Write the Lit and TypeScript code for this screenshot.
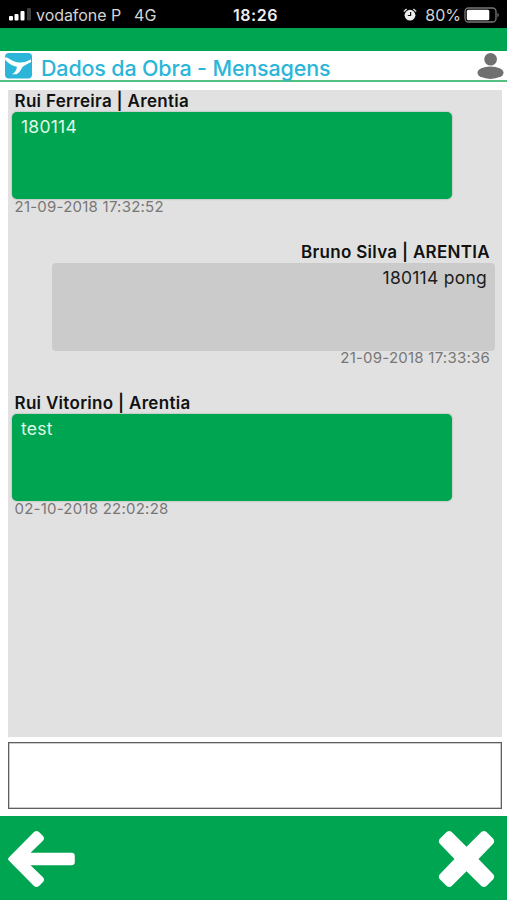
import { LitElement, html, css } from "lit";
import { customElement, property } from "lit/decorators.js";
import { classMap } from "lit/directives/class-map.js";

interface Message {
  author: string;
  text: string;
  date: string;
  own: boolean;
}

const MESSAGES: Message[] = [
  { author: "Rui Ferreira | Arentia", text: "180114", date: "21-09-2018 17:32:52", own: false },
  { author: "Bruno Silva | ARENTIA", text: "180114 pong", date: "21-09-2018 17:33:36", own: true },
  { author: "Rui Vitorino | Arentia", text: "test", date: "02-10-2018 22:02:28", own: false },
];

@customElement("status-bar")
class StatusBar extends LitElement {
  static styles = css`
    :host {
      display: grid;
      grid-template-columns: 1fr auto 1fr;
      align-items: center;
      height: 28px;
      padding: 0 6px 0 9px;
      background: #000;
      color: #d4d4d4;
      font-size: 16px;
      line-height: 28px;
      box-sizing: border-box;
    }
    svg { display: block; flex: none; }
    .left, .right { display: flex; align-items: center; height: 28px; padding-top: 1px; box-sizing: border-box; }
    .right { justify-content: flex-end; }
    .carrier { margin-left: 4px; letter-spacing: -0.05px; }
    .network { margin-left: 13px; }
    .time { font-weight: 600; color: #eee; padding: 1px 0 0 1px; letter-spacing: 0.5px; }
    .level { margin: 0 3px 0 8px; }
  `;
  render() {
    return html`
      <div class="left">
        <svg width="23" height="14" viewBox="0 0 23 14">
          <rect x="0" y="8" width="4" height="4.500" rx="1" fill="#fff" />
          <rect x="5.500" y="6" width="4" height="6.500" rx="1" fill="#fff" />
          <rect x="11.500" y="3" width="4" height="9.500" rx="1" fill="#fff" />
          <rect x="18" y="0" width="4" height="12.500" rx="1" fill="#3c3c3c" />
        </svg>
        <span class="carrier">vodafone P</span><span class="network">4G</span>
      </div>
      <div class="time">18:26</div>
      <div class="right">
        <svg width="14" height="14" viewBox="0 0 14 14">
          <circle cx="7" cy="7.200" r="5.400" fill="#eee" />
          <path d="M.8 3.600 3.600 1M13.200 3.600 10.400 1" stroke="#ddd" stroke-width="1.400" />
          <path d="M7.600 4v3.500H4.800" fill="none" stroke="#111" stroke-width="1.200" />
        </svg>
        <span class="level">80%</span>
        <svg width="37" height="16" viewBox="0 0 37 16">
          <rect x="1" y="1" width="31" height="14" rx="3.500" fill="none" stroke="#777" stroke-width="1.300" />
          <rect x="2.800" y="2.800" width="22.500" height="10.400" rx="1.500" fill="#fff" />
          <path d="M33.500 5.700q2.500 2.300 0 4.600z" fill="#888" />
        </svg>
      </div>
    `;
  }
}

@customElement("page-header")
class PageHeader extends LitElement {
  static styles = css`
    :host {
      display: flex;
      align-items: center;
      height: 31px;
      padding: 0 3px 0 5px;
      box-sizing: border-box;
      background: #fff;
      border-bottom: 2px solid #52c080;
    }
    svg { display: block; flex: none; }
    .title {
      flex: 1;
      margin-left: 9px;
      padding-top: 4px;
      font-size: 21.5px;
      line-height: 28px;
      font-weight: 500;
      letter-spacing: -0.17px;
      color: #2bb5d8;
      white-space: nowrap;
    }
  `;
  render() {
    return html`
      <svg width="27" height="26" viewBox="0 0 27 26">
        <rect width="27" height="25.500" rx="4" fill="#2bb5d8" />
        <path d="M0 4.500 2 4.500Q7.500 8.300 12 9.200 18 10.700 26 6.500V9Q20 12 17.500 14 14.500 20 11.500 21.300L7 21.300Q12 18 11.800 13.700 6 13 0 6.800z" fill="#fff" />
      </svg>
      <span class="title">Dados da Obra - Mensagens</span>
      <svg width="27" height="27" viewBox="0 0 27 27">
        <circle cx="13.600" cy="7.200" r="6.300" fill="#707070" />
        <ellipse cx="13.500" cy="20.700" rx="13" ry="6.200" fill="#707070" />
      </svg>
    `;
  }
}

@customElement("message-item")
class MessageItem extends LitElement {
  @property({ attribute: false }) message!: Message;
  static styles = css`
    :host { display: block; height: 151px; }
    .item { display: flex; flex-direction: column; align-items: flex-start; padding-left: 4px; }
    .author {
      height: 22px;
      padding: 0 2.5px;
      font-size: 17px;
      line-height: 22px;
      font-weight: 600;
      letter-spacing: 0.3px;
      color: #111;
    }
    .bubble {
      width: 440px;
      height: 87px;
      padding: 2px 9px;
      box-sizing: border-box;
      border-radius: 5px;
      background: #00a551;
      color: #e0f8e8;
      font-size: 17.5px;
      line-height: 25px;
      letter-spacing: 0.25px;
      box-shadow: 0 0 2px rgba(0, 80, 40, 0.4);
    }
    .date {
      padding: 0 2.5px;
      font-size: 15px;
      line-height: 15px;
      letter-spacing: 0.23px;
      color: #777;
    }
    .own { align-items: flex-end; padding: 0 7px 0 0; }
    .own .author, .own .date { padding-right: 5px; }
    .own .bubble {
      width: 443px;
      height: 88px;
      padding-right: 8px;
      background: #cbcbcb;
      color: #1c1c1c;
      text-align: right;
      box-shadow: none;
      border-radius: 4px;
    }
    .own .date { line-height: 13px; }
  `;
  render() {
    const m = this.message;
    return html`
      <div class=${classMap({ item: true, own: m.own })}>
        <div class="author">${m.author}</div>
        <div class="bubble">${m.text}</div>
        <div class="date">${m.date}</div>
      </div>
    `;
  }
}

@customElement("app-root")
class AppRoot extends LitElement {
  static styles = css`
    :host {
      display: flex;
      flex-direction: column;
      height: 900px;
      background: #fff;
      font-family: Inter, "Liberation Sans", sans-serif;
      overflow: hidden;
    }
    .band { height: 23px; background: #00a551; flex: none; }
    .thread {
      height: 647px;
      margin: 8px 5px 0 8px;
      background: #e1e1e1;
    }
    .compose {
      display: block;
      height: 67px;
      margin: 5px 5px 0 8px;
      padding: 6px;
      box-sizing: border-box;
      border: 1px solid #606060;
      border-radius: 0;
      box-shadow: inset 0 0 0 0.5px #999;
      background: #fff;
      resize: none;
      outline: none;
      font: inherit;
    }
    .actions {
      display: flex;
      justify-content: space-between;
      align-items: center;
      height: 84px;
      margin-top: auto;
      padding: 2px 12px 0 8px;
      box-sizing: border-box;
      background: #00a551;
    }
    svg { display: block; }
  `;
  render() {
    return html`
      <status-bar></status-bar>
      <div class="band"></div>
      <page-header></page-header>
      <div class="thread">
        ${MESSAGES.map((m) => html`<message-item .message=${m}></message-item>`)}
      </div>
      <textarea class="compose"></textarea>
      <div class="actions">
        <svg width="67" height="58" viewBox="0 0 67 58">
          <path d="M.8 27.500 26 2Q28.500-.2 31 2L35 6Q37 8.300 35 10.700L22.500 22.700H63.500Q66.800 22.700 66.800 26V32Q66.800 35.300 63.500 35.300H22.500L35 47.300Q37 49.700 35 52L31 56Q28.500 58.200 26 56L.8 30.500Q-.5 29 .8 27.500Z" fill="#fff" />
        </svg>
        <svg width="57" height="58" viewBox="0 0 57 58">
          <path d="M28.500 16.800 43.300 2Q46 0 48.500 2L55.200 8.700Q57.200 11.200 55.200 13.700L40.500 29 55.200 44.200Q57.200 46.700 55.200 49.200L48.500 56Q46 58 43.300 56L28.500 41.200 13.700 56Q11.200 58 8.700 56L1.800 49.200Q-.2 46.700 1.800 44.200L16.500 29 1.800 13.700Q-.2 11.200 1.800 8.700L8.700 2Q11.200 0 13.700 2Z" fill="#fff" />
        </svg>
      </div>
    `;
  }
}
